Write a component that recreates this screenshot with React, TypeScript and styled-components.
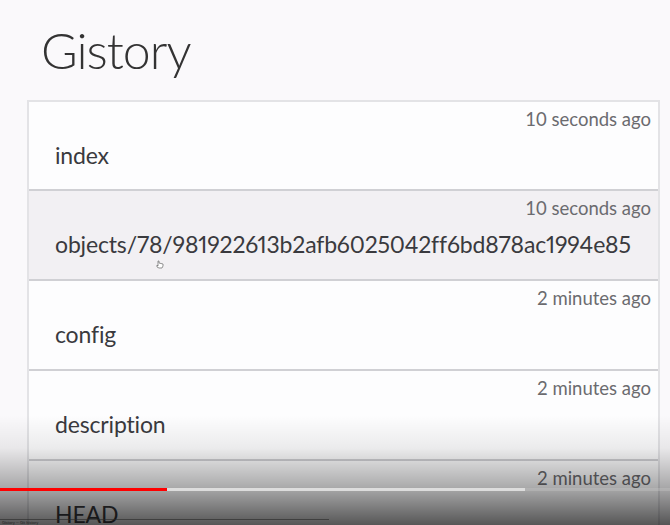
import React from "react";
import styled, { createGlobalStyle } from "styled-components";

const Global = createGlobalStyle`
  html, body { margin: 0; padding: 0; }
  body {
    background: #faf9fb;
    font-family: Lato, "Open Sans", sans-serif;
    color: #333;
    overflow: hidden;
  }
`;

const Page = styled.div`
  width: 670px;
  height: 525px;
  overflow: hidden;
  position: relative;
  box-sizing: border-box;
  padding: 0 10px 0 27px;
`;

const Title = styled.h1`
  margin: 0;
  padding: 20px 0 0 14px;
  height: 100px;
  box-sizing: border-box;
  font-size: 50px;
  line-height: 60px;
  font-weight: 300;
  color: #333;
  letter-spacing: -1px;
`;

const List = styled.div`
  border-left: 2px solid #e3e3e6;
  border-right: 2px solid #e3e3e6;
  background: #fff;
`;

const Row = styled.div<{ $active?: boolean }>`
  height: 90px;
  box-sizing: border-box;
  display: flex;
  flex-direction: column;
  padding: 4px 7px 0 26px;
  border-top: 2px solid #d0d0d4;
  background: ${(p) => (p.$active ? "#f2f0f3" : "#fdfdfe")};
  &:first-child {
    height: 89px;
    border-top-color: #e3e3e6;
  }
`;

const Time = styled.div`
  align-self: flex-end;
  font-size: 18.5px;
  line-height: 26px;
  color: #6b6b6f;
`;

const Name = styled.div`
  font-size: 23px;
  line-height: 30px;
  color: #3a3a3e;
  margin-top: 8px;
  white-space: nowrap;
  letter-spacing: -0.16px;
  font-variant-numeric: proportional-nums;
`;

const Shade = styled.div`
  position: absolute;
  left: 0;
  right: 0;
  bottom: 0;
  height: 110px;
  background: linear-gradient(
    to bottom,
    rgba(0, 0, 0, 0) 0%,
    rgba(0, 0, 0, 0.07) 30%,
    rgba(0, 0, 0, 0.32) 65%,
    rgba(0, 0, 0, 0.66) 100%
  );
  pointer-events: none;
`;

const Progress = styled.div`
  position: absolute;
  left: 0;
  right: 0;
  top: 488px;
  height: 3px;
  display: flex;
`;

const Seg = styled.div<{ $c: string; $w?: number }>`
  background: ${(p) => p.$c};
  ${(p) => (p.$w ? `width: ${p.$w}px;` : "flex: 1;")}
`;

const Footer = styled.div`
  position: absolute;
  left: 0;
  bottom: 0;
  width: 327px;
  height: 5px;
  border-top: 1px solid rgba(40, 40, 40, 0.6);
  font-size: 4px;
  line-height: 5px;
  color: #222;
  padding-left: 2px;
`;

const Cursor = styled.svg`
  position: absolute;
  left: 156px;
  top: 260px;
`;

const entries = [
  { time: "10 seconds ago", name: "index" },
  { time: "10 seconds ago", name: "objects/78/981922613b2afb6025042ff6bd878ac1994e85", active: true },
  { time: "2 minutes ago", name: "config" },
  { time: "2 minutes ago", name: "description" },
  { time: "2 minutes ago", name: "HEAD" },
];

export default function App() {
  return (
    <Page>
      <Global />
      <Title>Gistory</Title>
      <List>
        {entries.map((e) => (
          <Row key={e.name} $active={e.active}>
            <Time>{e.time}</Time>
            <Name>{e.name}</Name>
          </Row>
        ))}
      </List>
      <Cursor width="8" height="9" viewBox="0 0 8 9">
        <path d="M2 1 L2 6 L1 5 L1 7 L3 8 L6 8 L7 6 L7 4 L3 3 L3 1 Z" fill="#fff" stroke="#777" strokeWidth="0.8" />
      </Cursor>
      <Shade />
      <Progress>
        <Seg $c="#f00" $w={167} />
        <Seg $c="rgba(230,230,230,0.85)" $w={358} />
        <Seg $c="rgba(200,200,200,0.35)" />
      </Progress>
      <Footer>Gistory — Git history</Footer>
    </Page>
  );
}
